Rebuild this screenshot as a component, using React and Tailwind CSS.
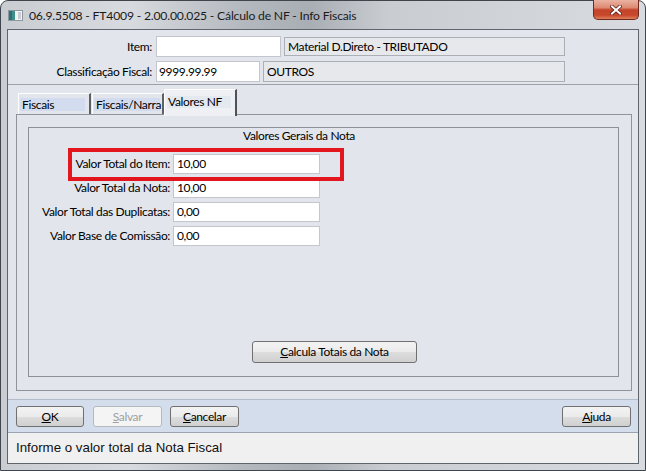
import React from "react";

function Btn({ children, w, disabled }) {
  return (
    <div
      className={
        "h-[21px] flex items-center justify-center rounded-[3px] border text-[12px] leading-none " +
        (disabled
          ? "border-[#b5b9bd] bg-[#f4f4f4] text-[#a0a0a0]"
          : "border-[#707070] bg-[linear-gradient(#f3f3f3_0%,#ebebeb_50%,#dddddd_51%,#d0d0d0_100%)] text-black")
      }
      style={{ width: w }}
    >
      {children}
    </div>
  );
}

function Field({ label, value }) {
  return (
    <div className="flex items-center h-[20px]">
      <div className="w-[142px] text-right pr-[1px] text-[12px]">{label}</div>
      <div className="ml-[2px] w-[147px] h-[20px] bg-white border border-[#c3c7cd] flex items-center pl-[3px] text-[12px]">
        {value}
      </div>
    </div>
  );
}

export default function App() {
  return (
    <div
      className="w-[646px] h-[471px] relative overflow-hidden bg-white text-black tracking-[-0.35px]"
      style={{ fontFamily: "Lato, 'Open Sans', sans-serif" }}
    >
      <div className="h-full flex flex-col rounded-t-[8px] border border-[#3f454c] px-[6px] pb-[6px] bg-[linear-gradient(90deg,#c9cdd2_0%,#d7dade_20%,#b3b8be_38%,#a9aeb4_48%,#c9cdd2_60%,#d8dbdf_100%)]">
        {/* title bar */}
        <div className="h-[28px] flex items-start">
          <svg width="15" height="11" viewBox="0 0 15 11" className="mt-[9px] ml-[1px]">
            <rect x="0.5" y="0.5" width="14" height="10" fill="#f2f4f4" stroke="#8f969c" />
            <rect x="1" y="1" width="6" height="9" fill="#3f8f88" />
            <rect x="1" y="1" width="3" height="9" fill="#2f6f78" />
            <rect x="10" y="2" width="3" height="7" fill="#c9ced2" />
          </svg>
          <div className="ml-[6px] mt-[7px] text-[12.2px] leading-[16px] tracking-[-0.2px] text-[#1b1b1b]">
            06.9.5508 - FT4009 - 2.00.00.025 - Cálculo de NF - Info Fiscais
          </div>
          <div className="ml-auto w-[46px] h-[20px] -mt-[1px] rounded-b-[5px] border border-[#6e2a1e] border-t-0 bg-[linear-gradient(#eab3a3_0%,#dd8a73_40%,#c4442a_52%,#c8482c_80%,#e0805c_100%)] flex items-center justify-center">
            <svg width="12" height="10" viewBox="0 0 12 10">
              <path d="M2 1.5 L10 8.5 M10 1.5 L2 8.5" stroke="#5a2016" strokeWidth="3.6" strokeLinecap="square" />
              <path d="M2 1.5 L10 8.5 M10 1.5 L2 8.5" stroke="#ffffff" strokeWidth="2" strokeLinecap="square" />
            </svg>
          </div>
        </div>

        {/* client */}
        <div className="flex-1 flex flex-col border border-[#5f656d] bg-[#e2e5eb]">
          {/* top section */}
          <div className="h-[55px] border-b border-[#9da2aa] pt-[6px] flex flex-col gap-[4px]">
            <div className="flex items-center h-[21px]">
              <div className="w-[144px] text-right text-[12px]">Item:</div>
              <div className="ml-[4px] w-[125px] h-[21px] bg-white border border-[#c3c7cd]" />
              <div className="ml-[3px] w-[281px] h-[19px] bg-[#e6e8ec] border border-[#abafb6] flex items-center pl-[3px] text-[12px]">
                Material D.Direto - TRIBUTADO
              </div>
            </div>
            <div className="flex items-center h-[21px]">
              <div className="w-[144px] text-right text-[12px]">Classificação Fiscal:</div>
              <div className="ml-[4px] w-[104px] h-[21px] bg-white border border-[#c3c7cd] flex items-center pl-[2px] text-[12px]">
                9999.99.99
              </div>
              <div className="ml-[3px] w-[302px] h-[21px] bg-[#e6e8ec] border border-[#abafb6] flex items-center pl-[3px] text-[12px]">
                OUTROS
              </div>
            </div>
          </div>

          {/* tab area */}
          <div className="h-[314px] pt-[4px] pl-[8px] pr-[6px] pb-[8px] flex flex-col">
            <div className="h-[25px] flex items-end pl-[2px] text-[12px]">
              <div className="w-[73px] h-[21px] border-l border-t border-white border-r-2 border-r-[#5d6167] pt-[4px] pl-[1px]">
                <div className="w-[65px] h-[13px] bg-[#d3dcee] pl-[2px] leading-[13px]">Fiscais</div>
              </div>
              <div className="ml-[1px] w-[72px] h-[21px] border-l border-t border-white border-r-2 border-r-[#5d6167] pt-[4px] pl-[1px]">
                <div className="w-[66px] h-[13px] bg-[#d3dcee] pl-[2px] leading-[13px] whitespace-nowrap">Fiscais/Narra</div>
              </div>
              <div className="relative z-10 -mb-[2px] w-[73px] h-[27px] border-l border-t border-white border-r-2 border-r-[#4f5359] bg-[#eef0f3] pt-[6px] pl-[2px]">
                <div className="w-[64px] h-[12px] bg-[#e4e8ef] pl-[1px] leading-[12px]">Valores NF</div>
              </div>
            </div>
            <div className="flex-1 border border-[#8f949b] pt-[12px] pl-[11px] pr-[12px] pb-[13px] flex">
              <div className="flex-1 border border-[#8c9199] flex flex-col">
                <div className="ml-[214px] mt-[1px] text-[12px] leading-[14px]">Valores Gerais da Nota</div>
                <div className="mt-[11px] flex flex-col gap-[4px]">
                  <Field label="Valor Total do Item:" value="10,00" />
                  <Field label="Valor Total da Nota:" value="10,00" />
                  <Field label="Valor Total das Duplicatas:" value="0,00" />
                  <Field label="Valor Base de Comissão:" value="0,00" />
                </div>
                <div className="flex-1" />
                <div className="ml-[223px] mb-[13px]">
                  <div className="w-[165px] h-[22px] flex items-center justify-center rounded-[3px] border border-[#707070] bg-[linear-gradient(#f3f3f3_0%,#ebebeb_50%,#dddddd_51%,#d0d0d0_100%)] text-[12px]">
                    <span>
                      <span className="underline">C</span>alcula Totais da Nota
                    </span>
                  </div>
                </div>
              </div>
            </div>
          </div>

          {/* button bar */}
          <div className="h-[34px] border-t border-b border-t-[#b3bccb] border-b-[#9aa3b0] bg-[#d4ddec] flex items-start pt-[6px] pl-[8px] pr-[7px]">
            <Btn w={68}>
              <span><span className="underline">O</span>K</span>
            </Btn>
            <div className="ml-[9px]">
              <Btn w={69} disabled>
                <span><span className="underline">S</span>alvar</span>
              </Btn>
            </div>
            <div className="ml-[8px]">
              <Btn w={69}>
                <span><span className="underline">C</span>ancelar</span>
              </Btn>
            </div>
            <div className="ml-auto">
              <Btn w={69}>
                <span><span className="underline">A</span>juda</span>
              </Btn>
            </div>
          </div>

          {/* status bar */}
          <div
            className="flex-1 bg-[#f0f0f0] flex items-center pl-[8px] text-[13.3px] tracking-normal text-[#111]"
            style={{ fontFamily: "'Liberation Sans', Arial, sans-serif" }}
          >
            Informe o valor total da Nota Fiscal
          </div>
        </div>
      </div>

      {/* red annotation overlay */}
      <div className="absolute left-[68px] top-[148px] w-[276px] h-[33px] border-[4px] border-[#e3151d]" />
    </div>
  );
}
